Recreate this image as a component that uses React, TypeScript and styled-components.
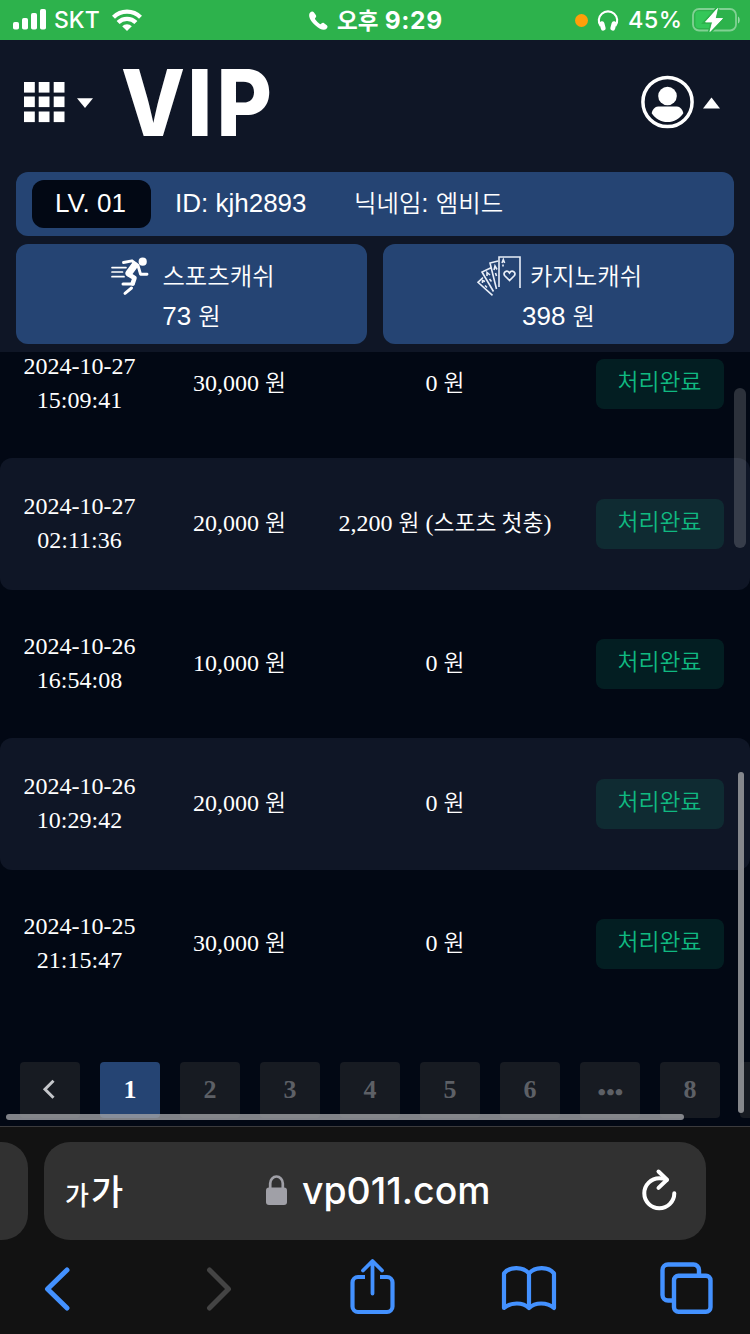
import React from "react";
import styled, { createGlobalStyle } from "styled-components";

const GlobalStyle = createGlobalStyle`
  * { box-sizing: border-box; }
  body { margin: 0; background: #020814; }
  svg { display: block; flex: none; overflow: visible; }
`;

const sans = `"Liberation Sans", "Noto Sans CJK KR", sans-serif`;
const serif = `"Liberation Serif", "Noto Sans CJK KR", serif`;
const system = `Inter, "Noto Sans CJK KR", sans-serif`;

const Screen = styled.div`
  position: relative;
  width: 750px;
  height: 1334px;
  overflow: hidden;
  display: flex;
  flex-direction: column;
  background: #020814;
  color: #fff;
`;

const StatusBar = styled.div`
  display: flex;
  align-items: center;
  flex: none;
  height: 40px;
  padding-left: 13px;
  background: #2db24c;
  font-family: ${system};
  font-size: 23px;
  line-height: 40px;
  white-space: nowrap;
`;

const StatusText = styled.span<{ $w: number; $ml: number; $weight?: number; $ls?: number; $size?: number }>`
  width: ${(p) => p.$w}px;
  height: 40px;
  margin-left: ${(p) => p.$ml}px;
  font-size: ${(p) => p.$size ?? 23}px;
  font-weight: ${(p) => p.$weight ?? 500};
  letter-spacing: ${(p) => p.$ls ?? 0}px;
`;

const StatusIcon = styled.span<{ $ml: number }>`
  margin-left: ${(p) => p.$ml}px;
`;

const RecordingDot = styled.span`
  width: 13px;
  height: 13px;
  margin-left: 131px;
  border-radius: 50%;
  background: #ff9f0a;
`;

const Header = styled.header`
  flex: none;
  height: 312px;
  padding: 0 16px;
  background: #0f1626;
  font-family: ${sans};
  font-size: 26px;
`;

const TopBar = styled.div`
  display: flex;
  align-items: center;
  height: 132px;
  padding: 0 14px 8px 8px;
`;

const MenuButton = styled.div`
  display: flex;
  align-items: center;
  gap: 12px;
`;

const Logo = styled.div`
  margin: 0 auto 0 30px;
`;

const UserButton = styled.div`
  display: flex;
  align-items: center;
  gap: 8px;
`;

const MemberBar = styled.div`
  display: flex;
  align-items: center;
  height: 64px;
  padding: 0 16px;
  border-radius: 12px;
  background: #254473;
`;

const Level = styled.span`
  width: 119px;
  height: 48px;
  padding-right: 2px;
  line-height: 46px;
  text-align: center;
  border-radius: 12px;
  background: #020814;
`;

const MemberField = styled.span<{ $w: number }>`
  width: ${(p) => p.$w}px;
  margin: -2px 0 0 24px;
  white-space: nowrap;
`;

const Korean = styled.span<{ $size: number; $ls?: number; $weight?: number }>`
  font-family: "Noto Sans CJK KR", sans-serif;
  font-size: ${(p) => p.$size}px;
  font-weight: ${(p) => p.$weight ?? 350};
  letter-spacing: ${(p) => p.$ls ?? 0}px;
  line-height: 1;
`;

const Wallets = styled.div`
  display: grid;
  grid-template-columns: 1fr 1fr;
  gap: 16px;
  margin-top: 8px;
`;

const Wallet = styled.div`
  height: 100px;
  padding-top: 11px;
  border-radius: 12px;
  background: #254473;
`;

const WalletTitle = styled.div<{ $gap: number }>`
  display: flex;
  align-items: center;
  justify-content: center;
  gap: ${(p) => p.$gap}px;
  height: 41px;
  padding-left: 2px;
`;

const WalletAmount = styled.div`
  height: 40px;
  line-height: 40px;
  text-align: center;
`;

const History = styled.main`
  position: relative;
  flex: none;
  height: 774px;
  overflow: hidden;
  font-family: ${serif};
  font-size: 24px;
`;

const Rows = styled.div`
  display: flex;
  flex-direction: column;
  gap: 8px;
  margin-top: -34px;
`;

const Row = styled.div<{ $shaded: boolean }>`
  display: grid;
  grid-template-columns: 159px 161px 250px 180px;
  align-items: center;
  justify-items: center;
  height: 132px;
  border-radius: 12px;
  text-align: center;
  line-height: 34px;
  background: ${(p) => (p.$shaded ? "#0f1626" : "transparent")};
`;

const DateCell = styled.div`
  width: 120px;
  padding-bottom: 2px;
`;

const Cell = styled.div`
  padding-bottom: 2px;
  white-space: nowrap;
`;

const Badge = styled.div`
  width: 128px;
  height: 50px;
  padding-right: 1px;
  line-height: 46px;
  border-radius: 8px;
  background: rgba(16, 185, 129, 0.13);
  color: #10b981;
`;

const Pagination = styled.nav`
  display: flex;
  gap: 20px;
  margin-top: 52px;
  padding-left: 20px;
`;

const PageButton = styled.div<{ $active?: boolean }>`
  display: flex;
  align-items: center;
  justify-content: center;
  flex: none;
  width: 60px;
  height: 56px;
  border-radius: 4px;
  background: ${(p) => (p.$active ? "#254473" : "#171b22")};
  color: ${(p) => (p.$active ? "#fff" : "#5d6066")};
  font-weight: 700;
  font-size: 26px;
`;

const Ellipsis = styled.span`
  padding: 4px 0 0 1px;
  font-size: 24px;
  letter-spacing: 0.2px;
`;

const ScrollThumb = styled.div<{ $x: number; $y: number; $w: number; $h: number; $color: string }>`
  position: absolute;
  left: ${(p) => p.$x}px;
  top: ${(p) => p.$y}px;
  width: ${(p) => p.$w}px;
  height: ${(p) => p.$h}px;
  border-radius: 6px;
  background: ${(p) => p.$color};
`;

const Browser = styled.footer`
  flex: 1;
  padding-top: 15px;
  border-top: 1px solid #3b3b3d;
  background: #121212;
  font-family: ${system};
`;

const AddressRow = styled.div`
  display: flex;
  gap: 16px;
  height: 98px;
`;

const PreviousTab = styled.div`
  width: 28px;
  border-radius: 0 26px 26px 0;
  background: #313131;
`;

const AddressBar = styled.div`
  display: flex;
  align-items: center;
  width: 662px;
  padding: 0 29px 2px 21px;
  border-radius: 26px;
  background: #313131;
`;

const TextSize = styled.div`
  display: flex;
  align-items: baseline;
  gap: 2px;
  width: 201px;
  margin-top: -2px;
`;

const Url = styled.div`
  display: flex;
  align-items: center;
  gap: 15px;
  margin-right: auto;
  font-size: 37.4px;
  font-weight: 500;
`;

const Toolbar = styled.div`
  display: flex;
  justify-content: space-between;
  padding: 18px 37px 0 43px;
`;

const ToolButton = styled.div<{ $w: number }>`
  display: flex;
  width: ${(p) => p.$w}px;
`;

const SignalIcon = () => (
  <svg width="33" height="22" viewBox="0 0 33 22" fill="#fff">
    <rect x="0" y="13" width="6" height="7.5" rx="1.8" />
    <rect x="9" y="9" width="6" height="11.5" rx="1.8" />
    <rect x="18" y="4" width="6" height="16.5" rx="1.8" />
    <rect x="27" y="0" width="6" height="20.5" rx="1.8" />
  </svg>
);

const WifiIcon = () => (
  <svg width="30" height="22" viewBox="0 0 30 22" fill="none" stroke="#fff" strokeWidth="4.2">
    <path d="M1.5 8.2a19.2 19.2 0 0 1 27 0" />
    <path d="M6.1 13.6a12.6 12.6 0 0 1 17.8 0" />
    <path d="M15 22l-4.800-4.800a6.800 6.800 0 0 1 9.600 0z" fill="#fff" stroke="none" />
  </svg>
);

const PhoneIcon = () => (
  <svg width="19" height="19" viewBox="0 0 19 19" fill="#fff">
    <path d="M1.2 1.6C2.3.3 3.9.2 4.8 1.3l2 2.7c.7 1 .5 1.8-.3 2.7-.7.7-.7 1.1-.2 1.9a18 18 0 0 0 4.2 4.2c.8.5 1.2.5 1.9-.2.9-.8 1.7-1 2.7-.3l2.7 2c1.1.9.9 2.4-.3 3.5-2 1.800-6.300 1.200-11.300-3.500C1 9.800-1.400 4.200 1.200 1.600z" />
  </svg>
);

const HeadphonesIcon = () => (
  <svg width="20" height="21" viewBox="0 0 20 21" fill="none" stroke="#fff">
    <path d="M2.6 16A9.2 9.2 0 1 1 17.4 16" strokeWidth="2.1" />
    <path d="M4 13.6l1.2 4.6M16 13.6l-1.2 4.6" strokeWidth="4.8" strokeLinecap="round" />
  </svg>
);

const BatteryIcon = () => (
  <svg width="49" height="26" viewBox="0 0 49 26">
    <rect x="1" y="2" width="43" height="21.5" rx="6" fill="none" stroke="#fff" strokeOpacity=".4" strokeWidth="1.8" />
    <path d="M6.5 4.300H20V21H6.500A3 3 0 0 1 3.500 18V7.300A3 3 0 0 1 6.500 4.300z" fill="#34c759" />
    <path d="M46 9.500c2.300 1 2.300 6 0 7z" fill="#fff" fillOpacity=".5" />
    <path d="M25.500 1.500L13.500 15h7L18 24.500 30.500 11.500h-7.300z" fill="#fff" stroke="#2db24c" strokeWidth="4" paintOrder="stroke" />
    <path d="M25.500 1.500L13.500 15h7L18 24.500 30.500 11.500h-7.300z" fill="#fff" stroke="#fff" strokeWidth=".8" strokeLinejoin="round" />
  </svg>
);

const GridIcon = () => (
  <svg width="41" height="41" viewBox="0 0 41 41" fill="#fff">
    {[0, 14.5, 29.5].map((y) =>
      [0, 14.7, 29.7].map((x) => <rect key={`${x}-${y}`} x={x} y={y} width="10.8" height="10.6" />)
    )}
  </svg>
);

const CaretIcon = ({ up }: { up?: boolean }) => (
  <svg width={up ? 17 : 16} height="11" viewBox="0 0 18 11" preserveAspectRatio="none" fill="#fff">
    <path d={up ? "M9 .5l9 11H0z" : "M0 1.200h18L9 11z"} />
  </svg>
);

const VipLogo = () => (
  <svg width="150" height="108" viewBox="0 0 150 108" fill="#fff" fontFamily="Inter, sans-serif" fontWeight="800" fontSize="92">
    <text x="-2" y="87.5" textLength="64" lengthAdjust="spacingAndGlyphs">V</text>
    <text x="64" y="87.5" textLength="25.5" lengthAdjust="spacingAndGlyphs">I</text>
    <text x="93.5" y="87.5" textLength="55.5" lengthAdjust="spacingAndGlyphs">P</text>
  </svg>
);

const UserIcon = () => (
  <svg width="54" height="54" viewBox="0 0 54 54">
    <circle cx="26.500" cy="27" r="24.600" fill="none" stroke="#fff" strokeWidth="3.500" />
    <circle cx="26.500" cy="21" r="9.300" fill="#fff" />
    <path d="M17 31.500h19c3 0 5.500 3 6.300 6.700C38.500 44 33 47 26.500 47S14.500 44 10.700 38.200C11.500 34.500 14 31.500 17 31.500z" fill="#fff" />
  </svg>
);

const RunnerIcon = () => (
  <svg width="38" height="38" viewBox="0 0 38 38" fill="none" stroke="#fff" strokeLinecap="round" strokeLinejoin="round">
    <circle cx="32.7" cy="4.700" r="4.100" fill="#fff" stroke="none" />
    <path d="M13.5 5.500l8.500-1.700 6 4.700 2.500 8.700h6.500" strokeWidth="2.900" />
    <path d="M24.500 8.500l-5.500 7.500" strokeWidth="7" />
    <path d="M18 17l6.500 4-1.800 5.500" strokeWidth="4.500" />
    <path d="M23 27H13" strokeWidth="3" />
    <path d="M21.500 31l-6.500 5.300" strokeWidth="3" />
    <path d="M2 10.600h14M2 15h10.500M2 19.700h12" strokeWidth="1.700" />
  </svg>
);

const CardsIcon = () => (
  <svg width="44" height="40" viewBox="0 0 44 40" fill="none" stroke="#e8eef8" strokeWidth="1.600">
    <path d="M22 31V1h21v31" />
    <path d="M21 5l-8 2 6.500 26M13.500 12l-8.500 4 11.500 19.500M6 21.500l-5 4.800 14.500 13" />
    <path d="M32.500 24.500l-4.700-4.700c-2.600-3.300 2.200-6.600 4.700-2.800 2.500-3.800 7.300-.5 4.700 2.800z" strokeWidth="1.700" />
    <path d="M25 7l1.300-3.500L27.600 7M17 14l1-4 2 3.500M10 20l0-3.500 3 2.500M5.500 27v-2.500l2.500 1M18.500 17l1 3M12.500 23l2 2.500M8 29.500l2 2M26 8.500v2" />
  </svg>
);

const ChevronIcon = () => (
  <svg width="16" height="20" viewBox="0 0 16 20" fill="none" stroke="#c4c6ca" strokeWidth="3">
    <path d="M11.500 .7L3 9.200l8.500 8.500" />
  </svg>
);

const LockIcon = () => (
  <svg width="21" height="30" viewBox="0 0 21 30">
    <path d="M4.200 14V8.500a6.300 7 0 0 1 12.600 0V14" fill="none" stroke="#a0a0a7" strokeWidth="2.700" />
    <rect y="12.500" width="21" height="17.500" rx="3" fill="#a0a0a7" />
  </svg>
);

const ReloadIcon = () => (
  <svg width="35" height="42" viewBox="0 0 35 42" fill="none" stroke="#fff" strokeWidth="4" strokeLinecap="round" strokeLinejoin="round">
    <path d="M32.300 24.300A15 15 0 1 1 17.300 9.300c3 0 5.500.5 7.500 1.500" />
    <path d="M16.500 2.500l8.500 8.200-8.500 8.200" />
  </svg>
);

const BackIcon = ({ forward }: { forward?: boolean }) => (
  <svg width="28" height="56" viewBox="0 0 28 56" fill="none" stroke={forward ? "#444" : "#4391ff"} strokeWidth="5" strokeLinecap="round" strokeLinejoin="round">
    <path d={forward ? "M4.500 12l19 19-19 19" : "M24 12L4.500 31 24 50"} />
  </svg>
);

const ShareIcon = () => (
  <svg width="45" height="56" viewBox="0 0 45 56" fill="none" stroke="#4391ff" strokeWidth="4.200">
    <path d="M15 19H8a5.500 5.500 0 0 0-5.500 5.500v24A5.500 5.500 0 0 0 8 54h29a5.500 5.500 0 0 0 5.500-5.500V24.500a5.500 5.500 0 0 0-5.500-5.500h-7" />
    <path d="M22.500 35.500V4M13 12.500l9.500-9.500L32 12.500" strokeLinecap="round" strokeLinejoin="round" strokeWidth="3.800" />
  </svg>
);

const BookIcon = () => (
  <svg width="56" height="56" viewBox="0 0 56 56" fill="none" stroke="#4391ff" strokeWidth="4.200" strokeLinejoin="round">
    <path d="M28 15.500C22 8 8 8.500 3 15.500V50c7-6 19-6 25 0 6-6 18-6 25 0V15.500C48 8.500 34 8 28 15.500zM28 15.500V50" />
  </svg>
);

const TabsIcon = () => (
  <svg width="53" height="56" viewBox="0 0 53 56" fill="none" stroke="#4391ff" strokeWidth="4.400">
    <path d="M13 42.500H8A5.500 5.500 0 0 1 2.500 37V12A5.500 5.500 0 0 1 8 6.500h25.500a5.500 5.500 0 0 1 5.500 5.500V17" />
    <rect x="14" y="17.800" width="36.500" height="36" rx="4.500" />
  </svg>
);

interface Deposit {
  date: string;
  time: string;
  amount: string;
  bonus: string;
  note?: string;
}

const deposits: Deposit[] = [
  { date: "2024-10-27", time: "15:09:41", amount: "30,000", bonus: "0" },
  { date: "2024-10-27", time: "02:11:36", amount: "20,000", bonus: "2,200", note: "스포츠 첫충" },
  { date: "2024-10-26", time: "16:54:08", amount: "10,000", bonus: "0" },
  { date: "2024-10-26", time: "10:29:42", amount: "20,000", bonus: "0" },
  { date: "2024-10-25", time: "21:15:47", amount: "30,000", bonus: "0" },
];

const pages = ["2", "3", "4", "5", "6", "•••", "8", ""];

export default function App() {
  return (
    <Screen>
      <GlobalStyle />
      <StatusBar>
        <SignalIcon />
        <StatusText $w={47} $ml={8}>SKT</StatusText>
        <StatusIcon $ml={11}><WifiIcon /></StatusIcon>
        <StatusIcon $ml={167}><PhoneIcon /></StatusIcon>
        <StatusText $w={107} $ml={9} $weight={700} $size={24.5} $ls={0.6}>
          <Korean $size={22.5} $weight={700}>오후</Korean> 9:29
        </StatusText>
        <RecordingDot />
        <StatusIcon $ml={10}><HeadphonesIcon /></StatusIcon>
        <StatusText $w={55} $ml={10} $size={23.5} $ls={0.4}>45%</StatusText>
        <StatusIcon $ml={9}><BatteryIcon /></StatusIcon>
      </StatusBar>

      <Header>
        <TopBar>
          <MenuButton>
            <GridIcon />
            <CaretIcon />
          </MenuButton>
          <Logo><VipLogo /></Logo>
          <UserButton>
            <UserIcon />
            <CaretIcon up />
          </UserButton>
        </TopBar>
        <MemberBar>
          <Level>LV. 01</Level>
          <MemberField $w={155}>ID: kjh2893</MemberField>
          <MemberField $w={160}>
            <Korean $size={24.4}>닉네임</Korean>: <Korean $size={24.4}>엠비드</Korean>
          </MemberField>
        </MemberBar>
        <Wallets>
          <Wallet>
            <WalletTitle $gap={14}>
              <RunnerIcon />
              <Korean $size={24.4}>스포츠캐쉬</Korean>
            </WalletTitle>
            <WalletAmount>73 <Korean $size={24.4}>원</Korean></WalletAmount>
          </Wallet>
          <Wallet>
            <WalletTitle $gap={9}>
              <CardsIcon />
              <Korean $size={24.4}>카지노캐쉬</Korean>
            </WalletTitle>
            <WalletAmount>398 <Korean $size={24.4}>원</Korean></WalletAmount>
          </Wallet>
        </Wallets>
      </Header>

      <History>
        <Rows>
          {deposits.map((d, i) => (
            <Row key={d.time} $shaded={i % 2 === 1}>
              <DateCell>{d.date} {d.time}</DateCell>
              <Cell>{d.amount} <Korean $size={22.8}>원</Korean></Cell>
              <Cell>
                {d.bonus} <Korean $size={22.8}>원</Korean>
                {d.note && <> (<Korean $size={22.8}>{d.note}</Korean>)</>}
              </Cell>
              <Badge><Korean $size={22.8}>처리완료</Korean></Badge>
            </Row>
          ))}
        </Rows>
        <Pagination>
          <PageButton><ChevronIcon /></PageButton>
          <PageButton $active>1</PageButton>
          {pages.map((p, i) => (
            <PageButton key={i}>{p === "•••" ? <Ellipsis>{p}</Ellipsis> : p}</PageButton>
          ))}
        </Pagination>
        <ScrollThumb $x={734} $y={36} $w={12} $h={160} $color="rgba(255,255,255,.17)" />
        <ScrollThumb $x={738} $y={420} $w={6} $h={341} $color="rgba(150,151,155,.88)" />
        <ScrollThumb $x={6} $y={762} $w={678} $h={6} $color="rgba(160,161,165,.8)" />
      </History>

      <Browser>
        <AddressRow>
          <PreviousTab />
          <AddressBar>
            <TextSize>
              <Korean $size={26} $weight={500}>가</Korean>
              <Korean $size={35} $weight={500}>가</Korean>
            </TextSize>
            <Url><LockIcon />vp011.com</Url>
            <ReloadIcon />
          </AddressBar>
        </AddressRow>
        <Toolbar>
          <ToolButton $w={162}><BackIcon /></ToolButton>
          <ToolButton $w={144}><BackIcon forward /></ToolButton>
          <ToolButton $w={151}><ShareIcon /></ToolButton>
          <ToolButton $w={159}><BookIcon /></ToolButton>
          <TabsIcon />
        </Toolbar>
      </Browser>
    </Screen>
  );
}
